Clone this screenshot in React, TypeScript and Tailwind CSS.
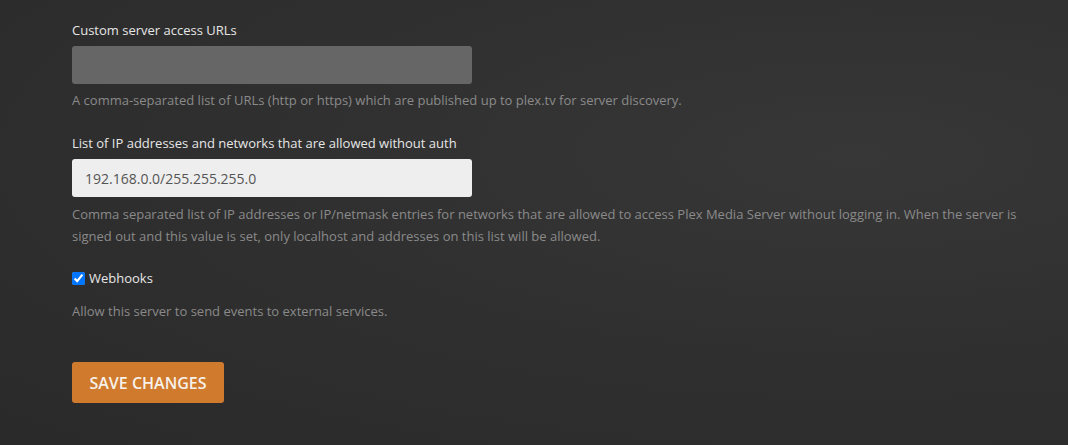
import { useState } from "react";

const font = { fontFamily: '"Open Sans", "Noto Sans", sans-serif' };

export default function App() {
  const [urls, setUrls] = useState("");
  const [allowed, setAllowed] = useState("192.168.0.0/255.255.255.0");
  const [webhooks, setWebhooks] = useState(true);

  return (
    <div
      className="min-h-[445px] w-full bg-[radial-gradient(ellipse_at_80%_35%,#373737_0%,#303030_45%,#2a2a2a_100%)] pl-[72px] pr-[30px] pt-[20px] pb-10 text-[13px]"
      style={font}
    >
      <div className="flex flex-col items-start">
        <label className="leading-[20px] text-[#e6e6e6]">Custom server access URLs</label>
        <input
          value={urls}
          onChange={(e) => setUrls(e.target.value)}
          className="mt-[6px] h-[38px] w-[400px] rounded-[3px] bg-[#666666] px-[13px] text-[14px] text-[#eeeeee] outline-none"
        />
        <p className="mt-[5px] leading-[22px] text-[#8a8a8a]">
          A comma-separated list of URLs (http or https) which are published up to plex.tv for server discovery.
        </p>
      </div>

      <div className="mt-[22px] flex flex-col items-start">
        <label className="leading-[20px] text-[#e6e6e6]">
          List of IP addresses and networks that are allowed without auth
        </label>
        <input
          value={allowed}
          onChange={(e) => setAllowed(e.target.value)}
          className="mt-[6px] h-[38px] w-[400px] rounded-[3px] bg-[#eeeeee] px-[13px] text-[14px] text-[#555555] outline-none"
        />
        <p className="mt-[6px] max-w-[966px] leading-[22px] text-[#8a8a8a]">
          Comma separated list of IP addresses or IP/netmask entries for networks that are allowed to access Plex Media
          Server without logging in. When the server is signed out and this value is set, only localhost and addresses
          on this list will be allowed.
        </p>
      </div>

      <div className="mt-[21px] flex flex-col items-start">
        <label className="flex items-center leading-[20px] text-[#e6e6e6]">
          <input
            type="checkbox"
            checked={webhooks}
            onChange={(e) => setWebhooks(e.target.checked)}
            className="m-0 mr-[4px] h-[13px] w-[13px] accent-[#0075ff]"
          />
          Webhooks
        </label>
        <p className="mt-[12px] leading-[22px] text-[#8a8a8a]">Allow this server to send events to external services.</p>
      </div>

      <button className="mt-[40px] h-[41px] w-[152px] rounded-[3px] bg-[#cf7a2c] text-[16px] font-semibold uppercase text-[#f7f1ea]">
        Save Changes
      </button>
    </div>
  );
}
